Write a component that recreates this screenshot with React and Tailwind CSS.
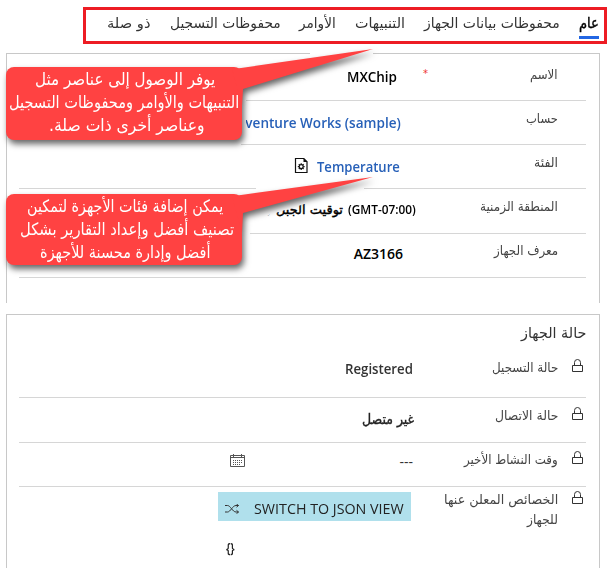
import { useLayoutEffect, useRef } from "react";

// Single line of text squeezed or stretched horizontally to a given width.
function Fit({ w, className = "", ltr = false, children }) {
  const ref = useRef(null);
  useLayoutEffect(() => {
    const el = ref.current;
    el.style.transform = "scaleX(" + w / el.offsetWidth + ")";
  }, [w]);
  return (
    <div dir="rtl" className="flex shrink-0 justify-start" style={{ width: w }}>
      <span ref={ref} dir={ltr ? "ltr" : "rtl"} className={"inline-block shrink-0 origin-right whitespace-nowrap " + className}>
        {children}
      </span>
    </div>
  );
}

const ARABIC = "font-['DejaVu_Sans',sans-serif]";
const LATIN = "font-['Open_Sans','Noto_Sans',sans-serif]";

function Tab({ w, active, children }) {
  return (
    <div className={"flex h-[26px] flex-col justify-between " + (active ? "text-black" : "text-[#333]")}>
      <Fit w={w} className={active ? "text-[15px] leading-5 [-webkit-text-stroke:0.4px_black]" : "text-[14px] leading-5"}>{children}</Fit>
      {active && <div className="h-[3px] bg-[#2266e3]" />}
    </div>
  );
}

function Lock() {
  return (
    <svg className="mt-px h-[14px] w-[11px] shrink-0" viewBox="0 0 11 14" fill="none" stroke="#333" strokeWidth="1">
      <path d="M.5 6.5h10v6H.5zM2.5 6.5V3.5a3 3 0 0 1 6 0v3" />
    </svg>
  );
}

function FileGear() {
  return (
    <svg className="h-[17px] w-[15px]" viewBox="0 0 15 17" fill="none" stroke="#111" strokeWidth="1.2">
      <path d="M1.5 1.5h8.300l3.200 3.200v10.800H1.500z" />
      <path d="M9.500 1v4h4z" fill="#111" stroke="none" />
      <circle cx="7.200" cy="9.600" r="2" />
      <path d="M7.200 6.200v1.200M7.200 11.800V13M3.800 9.600H5M9.400 9.600h1.200M4.800 7.200l.9.900M8.700 11.100l.9.900M4.800 12l.9-.9M8.700 8.100l.9-.9" />
    </svg>
  );
}

function Calendar() {
  return (
    <svg className="h-[14px] w-[15px]" viewBox="0 0 15 14" fill="none" stroke="#555" strokeWidth="1">
      <path d="M.5 1.500h14v11H.5zM.5 3.500h14M3.500 0v3M11.500 0v3" />
      <path d="M3 6.500h10M3 8.500h10M3 10.500h8" strokeDasharray="1 1" />
    </svg>
  );
}

function Shuffle() {
  return (
    <svg className="h-[10px] w-[14px]" viewBox="0 0 14 10" fill="none" stroke="#333" strokeWidth="1">
      <path d="M0 1.500h2.500c3 0 5 6.500 8.500 6.500h2.500M0 8h2.500c3 0 5-6.500 8.500-6.500h2.500M11.500 0l2 1.500-2 1.700M11.500 6.300l2 1.700-2 1.700" />
    </svg>
  );
}

function Row({ className, label, labelWidth, children }) {
  return (
    <div className={"flex items-start border-b border-[#d6d6d6] pr-7 " + className}>
      <div className="w-[128px] shrink-0">
        <Fit w={labelWidth} className="text-[13px] leading-5 text-[#444]">{label}</Fit>
      </div>
      {children}
    </div>
  );
}

function Callout({ className, tail, halo, height, lines }) {
  return (
    <div dir="ltr" className={"absolute left-0 h-[110px] w-[380px] " + className}>
      <svg className="absolute inset-0" width="380" height="110">
        <path d={halo} fill="#fff" />
        <g fill="#ff4242" className="drop-shadow-[2px_4px_3px_rgba(0,0,0,0.6)]">
          <rect x="6" y="21" width="236" height={height} rx="8" />
          <path d={tail} />
        </g>
      </svg>
      <div className="relative flex h-full w-[242px] flex-col items-end pt-[22px] text-white">
        {lines.map((l) => (
          <div key={l.text} className="h-[23px]" style={{ paddingRight: l.inset }}>
            <Fit w={l.w} className="text-[17px] leading-[23px]">{l.text}</Fit>
          </div>
        ))}
      </div>
    </div>
  );
}

export default function App() {
  return (
    <div dir="rtl" className={"relative h-[568px] w-[611px] overflow-hidden bg-white " + ARABIC}>
      <div className="pt-[7px] pr-1">
        <nav className="flex h-[37px] w-[524px] border-[3px] border-[#ed1c24] pt-[3px] pr-[5px]">
          <Tab w={20} active>عام</Tab>
          <div className="w-[19px]" />
          <Tab w={136}>محفوظات بيانات الجهاز</Tab>
          <div className="w-[19px]" />
          <Tab w={50}>التنبيهات</Tab>
          <div className="w-[19px]" />
          <Tab w={37}>الأوامر</Tab>
          <div className="w-[18px]" />
          <Tab w={111}>محفوظات التسجيل</Tab>
          <div className="w-5" />
          <Tab w={43}>ذو صلة</Tab>
        </nav>
      </div>

      <section className="mt-[9px] mr-[11px] h-[250px] w-[594px] border border-b-0 border-[#c8c8c8] pr-[13px] pl-3">
        <Row className="h-[47px] pt-[11px]" label="الاسم" labelWidth={28}>
          <span className="mr-[2px] w-[6px] pt-px text-[10px] leading-4 text-[#e33]">*</span>
          <div className="mr-[25px] pt-[2px] text-black">
            <Fit ltr w={50} className={"text-[14px] leading-5 font-semibold " + LATIN}>MXChip</Fit>
          </div>
        </Row>
        <Row className="h-[44px] pt-2" label="حساب" labelWidth={32}>
          <div className="mr-[29px] pt-1 text-[#2760b8]">
            <Fit ltr w={173} className={"text-[14px] leading-5 font-semibold " + LATIN}>Adventure Works (sample)</Fit>
          </div>
        </Row>
        <Row className="h-[44px] pt-2" label="الفئة" labelWidth={24}>
          <div className="mr-[30px] flex gap-2 pt-1 text-[#2760b8]">
            <Fit ltr w={83} className={"text-[14px] leading-5 font-semibold " + LATIN}>Temperature</Fit>
            <FileGear />
          </div>
        </Row>
        <Row className="h-[45px] pt-2" label="المنطقة الزمنية" labelWidth={78}>
          <div className="mr-[14px] flex gap-[5px] pt-[3px] text-black">
            <Fit ltr w={68} className={"text-[12px] leading-5 font-semibold " + LATIN}>(GMT-07:00)</Fit>
            <Fit w={76} className="text-[13px] leading-5 [-webkit-text-stroke:0.4px_black]">توقيت الجبل (</Fit>
          </div>
        </Row>
        <Row className="h-[44px] pt-[7px]" label="معرف الجهاز" labelWidth={64}>
          <div className="mr-[27px] pt-[3px] text-black">
            <Fit ltr w={49} className={"text-[14px] leading-5 font-semibold " + LATIN}>AZ3166</Fit>
          </div>
        </Row>
      </section>

      <section className="mt-[11px] mr-[11px] h-[260px] w-[594px] border border-[#c8c8c8] pt-[6px] pr-[13px] pl-3">
        <h2 className="h-[34px] text-[#333]">
          <Fit w={65} className="text-[15px] leading-6">حالة الجهاز</Fit>
        </h2>
        <div className="flex h-[43px] items-start border-b border-[#d6d6d6] pr-[3px] pt-[2px]">
          <div className="pt-px"><Lock /></div>
          <div className="mr-[14px] w-[145px]"><Fit w={66} className="text-[13px] leading-[22px] text-[#444]">حالة التسجيل</Fit></div>
          <div className="pt-[2px] text-[#333]"><Fit ltr w={68} className={"text-[14px] leading-5 font-semibold " + LATIN}>Registered</Fit></div>
        </div>
        <div className="flex h-[45px] items-start border-b border-[#d6d6d6] pr-[3px] pt-[8px]">
          <Lock />
          <div className="mr-[14px] w-[144px]"><Fit w={63} className="text-[13px] leading-5 text-[#444]">حالة الاتصال</Fit></div>
          <div className="pt-[3px] text-[#222]"><Fit w={52} className="text-[14px] leading-5 [-webkit-text-stroke:0.4px_#222]">غير متصل</Fit></div>
        </div>
        <div className="flex h-[44px] items-start border-b border-[#d6d6d6] pr-[3px] pt-[7px]">
          <Lock />
          <div className="mr-[14px] w-[145px]"><Fit w={94} className="text-[13px] leading-5 text-[#444]">وقت النشاط الأخير</Fit></div>
          <div className="pt-[2px] text-[#333]"><Fit ltr w={14} className={"text-[14px] leading-5 " + LATIN}>---</Fit></div>
          <div className="mr-[154px] pt-[4px]"><Calendar /></div>
        </div>
        <div className="flex items-start pr-[3px] pt-[3px]">
          <Lock />
          <div className="mr-[14px] w-[147px] text-[#444]">
            <Fit w={114} className="text-[13px] leading-5">الخصائص المعلن عنها</Fit>
            <Fit w={31} className="text-[13px] leading-[19px]">للجهاز</Fit>
          </div>
          <div className="pt-[2px]">
            <button className="flex h-[29px] w-[193px] items-center bg-[#b0e0ec] pt-[4px] pr-[7px] text-[#222]">
              <Fit ltr w={150} className={"text-[14px] leading-5 " + LATIN}>SWITCH TO JSON VIEW</Fit>
              <div className="mr-[15px]"><Shuffle /></div>
            </button>
            <div dir="ltr" className={"flex h-[54px] items-end pl-2 text-[#222]" + " " + LATIN}>
              <div className="h-[37px]">
                <Fit ltr w={9} className="text-[14px] leading-5 font-semibold">{"{}"}</Fit>
              </div>
            </div>
          </div>
        </div>
      </section>

      <Callout
        className="top-[46px]"
        height={73}
        tail="M232 23L241 22L373 3L243 43L242 60Z"
        halo="M11 92H241V103H11ZM310 3H373V12H310ZM240 50H246V90H240Z"
        lines={[
          { text: "يوفر الوصول إلى عناصر مثل", w: 180, inset: 27 },
          { text: "التنبيهات والأوامر ومحفوظات التسجيل", w: 230, inset: 3 },
          { text: "وعناصر أخرى ذات صلة.", w: 156, inset: 38 },
        ]}
      />
      <Callout
        className="top-[173px]"
        height={71}
        tail="M232 23L241 22L373 4L243 40L242 60Z"
        halo="M256 10H364V18H256ZM241 20H340L256 46L246 70H241Z"
        lines={[
          { text: "يمكن إضافة فئات الأجهزة لتمكين", w: 196, inset: 19 },
          { text: "تصنيف أفضل وإعداد التقارير بشكل", w: 214, inset: 8 },
          { text: "أفضل وإدارة محسنة للأجهزة", w: 170, inset: 32 },
        ]}
      />
    </div>
  );
}
